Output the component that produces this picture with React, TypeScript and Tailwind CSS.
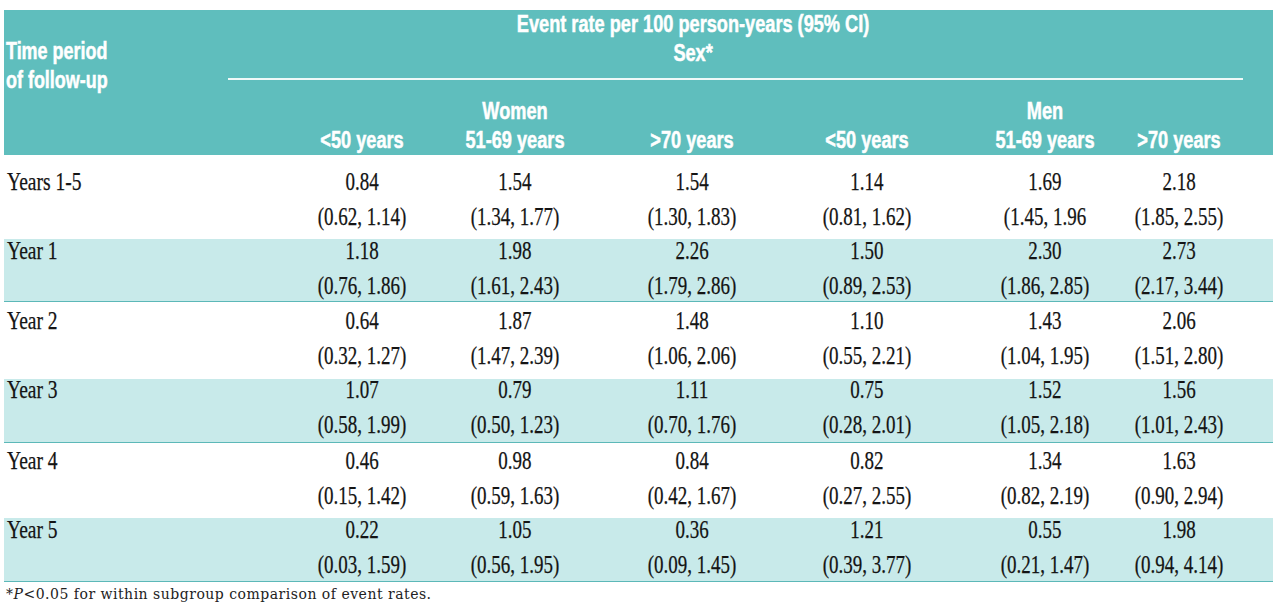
import React from "react";

type Cell = [string, string];
type Row = { label: string; cells: Cell[] };

const rows: Row[] = [
  { label: "Years 1-5", cells: [["0.84", "(0.62, 1.14)"], ["1.54", "(1.34, 1.77)"], ["1.54", "(1.30, 1.83)"], ["1.14", "(0.81, 1.62)"], ["1.69", "(1.45, 1.96"], ["2.18", "(1.85, 2.55)"]] },
  { label: "Year 1", cells: [["1.18", "(0.76, 1.86)"], ["1.98", "(1.61, 2.43)"], ["2.26", "(1.79, 2.86)"], ["1.50", "(0.89, 2.53)"], ["2.30", "(1.86, 2.85)"], ["2.73", "(2.17, 3.44)"]] },
  { label: "Year 2", cells: [["0.64", "(0.32, 1.27)"], ["1.87", "(1.47, 2.39)"], ["1.48", "(1.06, 2.06)"], ["1.10", "(0.55, 2.21)"], ["1.43", "(1.04, 1.95)"], ["2.06", "(1.51, 2.80)"]] },
  { label: "Year 3", cells: [["1.07", "(0.58, 1.99)"], ["0.79", "(0.50, 1.23)"], ["1.11", "(0.70, 1.76)"], ["0.75", "(0.28, 2.01)"], ["1.52", "(1.05, 2.18)"], ["1.56", "(1.01, 2.43)"]] },
  { label: "Year 4", cells: [["0.46", "(0.15, 1.42)"], ["0.98", "(0.59, 1.63)"], ["0.84", "(0.42, 1.67)"], ["0.82", "(0.27, 2.55)"], ["1.34", "(0.82, 2.19)"], ["1.63", "(0.90, 2.94)"]] },
  { label: "Year 5", cells: [["0.22", "(0.03, 1.59)"], ["1.05", "(0.56, 1.95)"], ["0.36", "(0.09, 1.45)"], ["1.21", "(0.39, 3.77)"], ["0.55", "(0.21, 1.47)"], ["1.98", "(0.94, 4.14)"]] },
];

const rowBox = [
  "h-[84px]",
  "h-[63px] bg-[#c8eaea] border-b border-[#5cb8b8]",
  "h-[77px]",
  "h-[64px] bg-[#c8eaea] border-b border-[#5cb8b8]",
  "h-[75px]",
  "h-[64px] bg-[#c8eaea] border-b border-[#5cb8b8]",
];

const rowShift = ["mt-[9px]", "-mt-[6px]", "mt-[1px]", "-mt-[7px]", "mt-0", "-mt-[6px]"];

const lastPad = ["", "", "", "", "", "pr-[61px]"];

const serif = { fontFamily: '"Liberation Serif", "Times New Roman", serif' };
const sans = { fontFamily: '"Liberation Sans", Arial, sans-serif' };

const headCols: { top: string; bottom: string }[] = [
  { top: "\u00a0", bottom: "<50 years" },
  { top: "Women", bottom: "51-69 years" },
  { top: "\u00a0", bottom: ">70 years" },
  { top: "\u00a0", bottom: "<50 years" },
  { top: "Men", bottom: "51-69 years" },
  { top: "\u00a0", bottom: ">70 years" },
];

export default function App() {
  return (
    <div className="w-[1280px] h-[615px] bg-white overflow-hidden pt-[10px] pl-[4px]">
      <div className="w-[1269px]">
        {/* Header */}
        <div
          className="flex h-[145px] bg-[#5fbebd] text-white font-bold text-[23px] leading-[29px] [-webkit-text-stroke:0.5px_white]"
          style={sans}
        >
          <div className="w-[224px] pt-[27px] pl-[2px]">
            <div className="origin-left scale-x-[0.78] whitespace-nowrap">
              <div>Time period</div>
              <div>of follow-up</div>
            </div>
          </div>
          <div className="flex-1 flex flex-col">
            <div className="pr-[115px] flex flex-col items-center">
              <div className="scale-x-[0.79] whitespace-nowrap flex flex-col items-center">
                <div>Event rate per 100 person-years (95% CI)</div>
                <div>Sex*</div>
              </div>
            </div>
            <div className="mt-[10px] mr-[30px] h-[2px] bg-white/90" />
            <div className="mt-[17px] grid grid-cols-[60px_148px_158px_196px_154px_202px_127px]">
              <div />
              {headCols.map((c, i) => (
                <div key={i} className={lastPad[i]}>
                  <div className="flex flex-col items-center scale-x-[0.79] whitespace-nowrap">
                    <div>{c.top}</div>
                    <div>{c.bottom}</div>
                  </div>
                </div>
              ))}
            </div>
          </div>
        </div>

        {/* Body */}
        <div
          className="text-[25px] leading-[35px] text-[#141414] [-webkit-text-stroke:0.25px_#141414]"
          style={serif}
        >
          {rows.map((r, ri) => (
            <div key={ri} className={`grid grid-cols-[284px_148px_158px_196px_154px_202px_127px] ${rowBox[ri]}`}>
              <div className={`pl-[3px] ${rowShift[ri]}`}>
                <div className="origin-left scale-x-[0.78] whitespace-nowrap">{r.label}</div>
              </div>
              {r.cells.map((c, ci) => (
                <div key={ci} className={`${rowShift[ri]} ${lastPad[ci]}`}>
                  <div className="flex flex-col items-center scale-x-[0.76] whitespace-nowrap">
                    <div>{c[0]}</div>
                    <div>{c[1]}</div>
                  </div>
                </div>
              ))}
            </div>
          ))}
        </div>

        {/* Footnote */}
        <div
          className="mt-[4px] pl-[2px] text-[14px] leading-[16px] tracking-[0.5px] text-[#222]"
          style={{ fontFamily: '"DejaVu Serif", "Liberation Serif", serif' }}
        >
          *<span className="italic">P</span>&lt;0.05 for within subgroup comparison of event rates.
        </div>
      </div>
    </div>
  );
}
